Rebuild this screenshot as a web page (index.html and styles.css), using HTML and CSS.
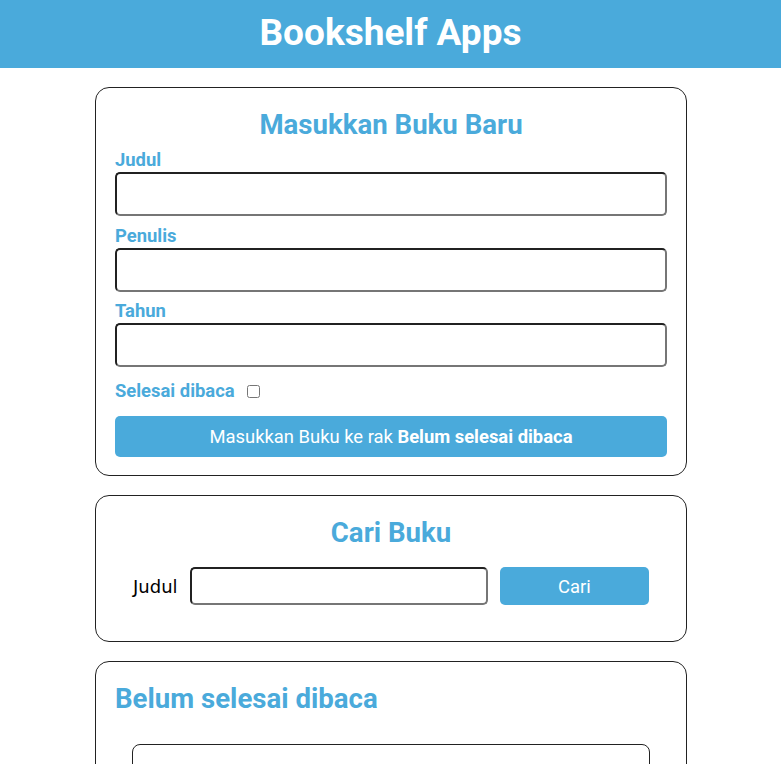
FILE: index.html
```html
<!DOCTYPE html>
<html lang="id">
<head>
<meta charset="utf-8">
<title>Bookshelf Apps</title>
<link rel="stylesheet" href="styles.css">
</head>
<body>
<header class="head-bar">
  <h1 class="head-title">Bookshelf Apps</h1>
</header>
<main class="main">
  <section class="card input-section">
    <h2 class="card-title card-title-center">Masukkan Buku Baru</h2>
    <form class="input-form">
      <div class="field">
        <label class="field-label" for="inputBookTitle">Judul</label>
        <input class="field-input" id="inputBookTitle" type="text">
      </div>
      <div class="field">
        <label class="field-label" for="inputBookAuthor">Penulis</label>
        <input class="field-input" id="inputBookAuthor" type="text">
      </div>
      <div class="field">
        <label class="field-label" for="inputBookYear">Tahun</label>
        <input class="field-input" id="inputBookYear" type="number">
      </div>
      <div class="field-inline">
        <label class="field-label" for="inputBookIsComplete">Selesai dibaca</label>
        <input class="field-check" id="inputBookIsComplete" type="checkbox">
      </div>
      <button class="btn btn-submit" type="submit">Masukkan Buku ke rak <strong>Belum selesai dibaca</strong></button>
    </form>
  </section>

  <section class="card search-section">
    <h2 class="card-title card-title-center">Cari Buku</h2>
    <form class="search-form">
      <label class="search-label" for="searchBookTitle">Judul</label>
      <input class="search-input" id="searchBookTitle" type="text">
      <button class="btn btn-search" type="submit">Cari</button>
    </form>
  </section>

  <section class="card shelf-section">
    <h2 class="card-title">Belum selesai dibaca</h2>
    <div class="book-list">
      <article class="book-item"></article>
    </div>
  </section>
</main>
</body>
</html>
```
FILE: styles.css
```css
* {
  margin: 0;
  padding: 0;
  box-sizing: border-box;
}

body {
  font-family: Roboto, "Liberation Sans", sans-serif;
  background: #ffffff;
  color: #000;
}

.head-bar {
  height: 68px;
  background: #4aaadb;
  display: flex;
  align-items: center;
  justify-content: center;
}

.head-title {
  color: #ffffff;
  font-size: 37px;
  font-weight: 700;
  line-height: 42px;
  margin-top: -3px;
}

.main {
  width: 593px;
  margin: 0 auto;
  padding: 19px 0 40px 1px;
  display: flex;
  flex-direction: column;
  gap: 19px;
}

.card {
  border: 1px solid #222;
  border-radius: 14px;
  padding: 20px 19px 18px;
}

.card-title {
  color: #4aaadb;
  font-size: 27.6px;
  font-weight: 700;
  line-height: 33px;
}

.card-title-center {
  text-align: center;
}

.input-form {
  margin-top: 9px;
  display: flex;
  flex-direction: column;
}

.field {
  display: flex;
  flex-direction: column;
  margin-bottom: 9.5px;
}

.field-label {
  color: #4aaadb;
  font-size: 18.4px;
  font-weight: 700;
  line-height: 20px;
}

.field-input {
  margin-top: 2px;
  height: 44px;
  border: 2px inset #767676;
  border-radius: 5px;
  padding: 0 8px;
  font-family: inherit;
  font-size: 16px;
}

.field-inline {
  display: flex;
  align-items: center;
  gap: 12px;
  margin-top: 4.5px;
}

.field-check {
  width: 13px;
  height: 13px;
}

.btn {
  background: #4aaadb;
  color: #ffffff;
  border: none;
  border-radius: 5px;
  font-family: inherit;
  font-size: 18.4px;
  cursor: pointer;
}

.btn-submit {
  margin-top: 15px;
  height: 41px;
}

.btn-submit strong {
  font-weight: 700;
}

.search-section {
  padding-bottom: 36px;
}

.search-form {
  margin-top: 18px;
  padding: 0 18px;
  display: grid;
  grid-template-columns: auto 2fr 1fr;
  gap: 12px;
  align-items: center;
}

.search-label {
  font-family: "DejaVu Sans", sans-serif;
  font-size: 18px;
}

.search-input {
  height: 38px;
  border: 2px inset #767676;
  border-radius: 5px;
  padding: 0 8px;
  font-family: inherit;
  font-size: 16px;
}

.btn-search {
  height: 38px;
}

.book-list {
  margin-top: 29px;
  padding: 0 17px;
}

.book-item {
  border: 1px solid #222;
  border-radius: 8px;
  min-height: 120px;
}
```
